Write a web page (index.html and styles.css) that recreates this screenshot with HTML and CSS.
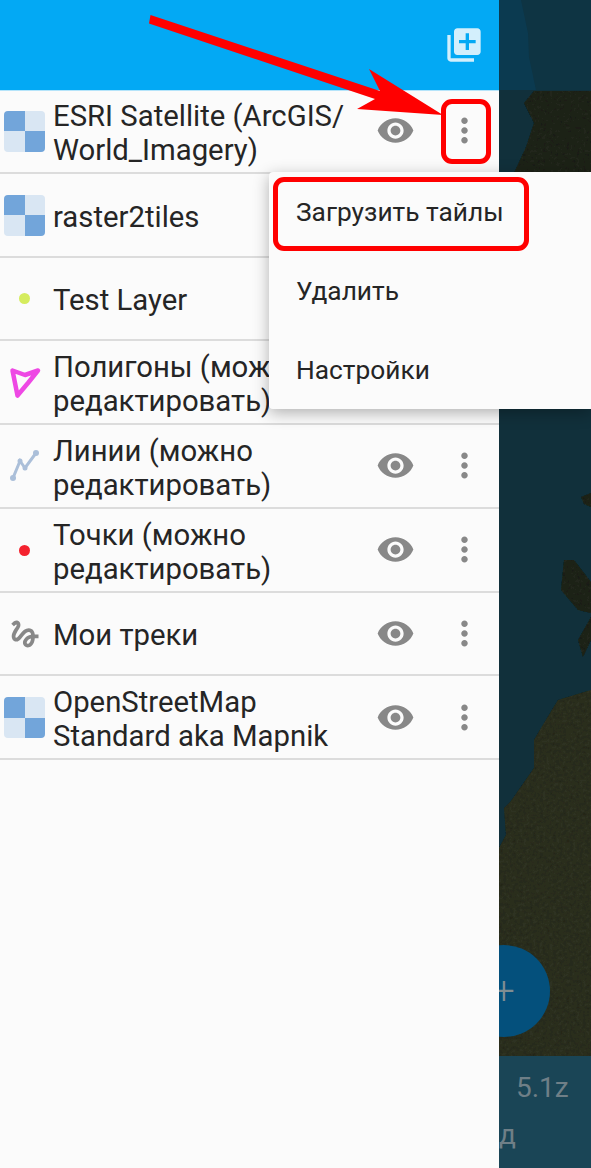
FILE: index.html
```html
<!DOCTYPE html>
<html lang="en">

<head>
    <meta charset="UTF-8">
    <meta name="viewport" content="width=device-width, initial-scale=1.0">
    <title>Слои</title>
    <link rel="stylesheet" href="styles.css">
</head>

<body>
    <div class="screen">
        <!-- map behind the drawer -->
        <svg class="map" viewBox="0 0 591 1168" aria-hidden="true">
            <defs>
                <filter id="grain" x="0" y="0" width="100%" height="100%">
                    <feTurbulence type="fractalNoise" baseFrequency="0.3" numOctaves="2" seed="4" />
                    <feColorMatrix values="0 0 0 0 0  0 0 0 0 0  0 0 0 0 0  0.6 0 0 0 -0.2" />
                    <feComposite in2="SourceGraphic" operator="in" />
                    <feMerge>
                        <feMergeNode in="SourceGraphic" />
                        <feMergeNode />
                    </feMerge>
                </filter>
            </defs>
            <rect x="499" y="0" width="92" height="90" fill="#0b3a50" />
            <path d="M521 0L528 33L529 57L536 90H591V0Z" fill="#0e3443" />
            <rect x="499" y="90" width="92" height="968" fill="#11303b" />
            <g filter="url(#grain)">
                <g fill="#24281d">
                    <path d="M534 91L524 103L534 123L526 147L514 173H591V91Z" />
                    <path d="M581 497L591 493V507L584 504Z" />
                    <path d="M564 560L574 560L591 582V613L578 610L561 590ZM591 617L578 640L583 657L591 640Z" />
                </g>
                <path d="M591 690L558 700L544 723L534 740L534 768L511 801L504 808L506 835L499 848V1058H591Z" fill="#2f3120" />
            </g>
            <rect x="499" y="1056" width="92" height="112" fill="#1a4556" />
        </svg>
        <button class="fab">+</button>
        <span class="zoom-level">5.1z</span>
        <span class="map-label">д</span>

        <div class="drawer">
            <header class="drawer-header">
                <svg class="icon add-layer" viewBox="0 0 24 24">
                    <path d="M4 6H2v14c0 1.1.9 2 2 2h14v-2H4V6zm16-4H8c-1.1 0-2 .9-2 2v12c0 1.1.9 2 2 2h12c1.100 0 2-.9 2-2V4c0-1.100-.9-2-2-2zm-1 9h-4v4h-2v-4H9V9h4V5h2v4h4v2z" />
                </svg>
            </header>

            <ul class="layers">
                <li class="layer">
                    <span class="layer-icon"><span class="tiles"><i class="dark"></i><i class="pale"></i><i class="pale"></i><i class="dark"></i></span></span>
                    <span class="layer-name">ESRI Satellite (ArcGIS/ World_Imagery)</span>
                    <svg class="icon eye" viewBox="0 0 24 24"><path d="M12 4.500C7 4.500 2.730 7.610 1 12c1.730 4.390 6 7.500 11 7.500s9.270-3.110 11-7.500c-1.730-4.390-6-7.500-11-7.500zM12 17c-2.760 0-5-2.240-5-5s2.240-5 5-5 5 2.240 5 5-2.240 5-5 5zm0-8c-1.660 0-3 1.340-3 3s1.340 3 3 3 3-1.340 3-3-1.340-3-3-3z" /></svg>
                    <svg class="icon more" viewBox="0 0 24 24"><path d="M12 8c1.100 0 2-.9 2-2s-.9-2-2-2-2 .9-2 2 .9 2 2 2zm0 2c-1.100 0-2 .9-2 2s.9 2 2 2 2-.9 2-2-.9-2-2-2zm0 6c-1.100 0-2 .9-2 2s.9 2 2 2 2-.9 2-2-.9-2-2-2z" /></svg>
                </li>
                <li class="layer">
                    <span class="layer-icon"><span class="tiles"><i class="dark"></i><i class="pale"></i><i class="pale"></i><i class="dark"></i></span></span>
                    <span class="layer-name">raster2tiles</span>
                </li>
                <li class="layer">
                    <span class="layer-icon"><span class="dot lime"></span></span>
                    <span class="layer-name">Test Layer</span>
                </li>
                <li class="layer">
                    <span class="layer-icon">
                        <svg class="shape" viewBox="0 0 41 41"><path d="M8.500 8.500L21 13L34 8.500L24 21L13.500 33.500Z" fill="none" stroke="#ee48e4" stroke-width="4.500" stroke-linejoin="round" /></svg>
                    </span>
                    <span class="layer-name">Полигоны (можно редактировать)</span>
                </li>
                <li class="layer">
                    <span class="layer-icon">
                        <svg class="shape" viewBox="0 0 41 41">
                            <path d="M9 32L16 15L21 22L32 7" fill="none" stroke="#abbfd9" stroke-width="3" />
                            <g fill="#abbfd9"><circle cx="9" cy="32" r="3" /><circle cx="16" cy="15" r="2.500" /><circle cx="21" cy="22" r="2.500" /><circle cx="32" cy="7" r="3" /></g>
                        </svg>
                    </span>
                    <span class="layer-name">Линии (можно редактировать)</span>
                    <svg class="icon eye" viewBox="0 0 24 24"><path d="M12 4.500C7 4.500 2.730 7.610 1 12c1.730 4.390 6 7.500 11 7.500s9.270-3.110 11-7.500c-1.730-4.390-6-7.500-11-7.500zM12 17c-2.760 0-5-2.240-5-5s2.240-5 5-5 5 2.240 5 5-2.240 5-5 5zm0-8c-1.660 0-3 1.340-3 3s1.340 3 3 3 3-1.340 3-3-1.340-3-3-3z" /></svg>
                    <svg class="icon more" viewBox="0 0 24 24"><path d="M12 8c1.100 0 2-.9 2-2s-.9-2-2-2-2 .9-2 2 .9 2 2 2zm0 2c-1.100 0-2 .9-2 2s.9 2 2 2 2-.9 2-2-.9-2-2-2zm0 6c-1.100 0-2 .9-2 2s.9 2 2 2 2-.9 2-2-.9-2-2-2z" /></svg>
                </li>
                <li class="layer">
                    <span class="layer-icon"><span class="dot red"></span></span>
                    <span class="layer-name">Точки (можно редактировать)</span>
                    <svg class="icon eye" viewBox="0 0 24 24"><path d="M12 4.500C7 4.500 2.730 7.610 1 12c1.730 4.390 6 7.500 11 7.500s9.270-3.110 11-7.500c-1.730-4.390-6-7.500-11-7.500zM12 17c-2.760 0-5-2.240-5-5s2.240-5 5-5 5 2.240 5 5-2.240 5-5 5zm0-8c-1.660 0-3 1.340-3 3s1.340 3 3 3 3-1.340 3-3-1.340-3-3-3z" /></svg>
                    <svg class="icon more" viewBox="0 0 24 24"><path d="M12 8c1.100 0 2-.9 2-2s-.9-2-2-2-2 .9-2 2 .9 2 2 2zm0 2c-1.100 0-2 .9-2 2s.9 2 2 2 2-.9 2-2-.9-2-2-2zm0 6c-1.100 0-2 .9-2 2s.9 2 2 2 2-.9 2-2-.9-2-2-2z" /></svg>
                </li>
                <li class="layer">
                    <span class="layer-icon">
                        <svg class="track" viewBox="0 0 24 24"><path d="M4.590 6.890c.7-.71 1.400-1.350 1.710-1.220.5.2 0 1.030-.3 1.520-.25.42-2.860 3.890-2.860 6.310 0 1.280.48 2.340 1.340 2.980.75.56 1.740.73 2.640.46 1.070-.31 1.950-1.400 3.060-2.770 1.210-1.490 2.830-3.440 4.080-3.440 1.630 0 1.650 1.010 1.760 1.790-3.780.64-5.380 3.670-5.380 5.370 0 1.700 1.440 3.090 3.210 3.090 1.630 0 4.290-1.330 4.690-6.100H21v-2.500h-2.470c-.15-1.650-1.090-4.200-4.030-4.200-2.250 0-4.180 1.910-4.940 2.840-.58.73-2.060 2.480-2.290 2.720-.25.3-.68.84-1.110.84-.45 0-.72-.83-.36-1.920.35-1.090 1.400-2.860 1.850-3.520.78-1.140 1.300-1.920 1.300-3.280C8.950 3.690 7.310 3 6.440 3 5.120 3 3.970 4 3.720 4.250c-.36.36-.66.66-.88.93l1.750 1.710zm9.290 11.660c-.31 0-.74-.26-.74-.72 0-.6.73-2.200 2.870-2.760-.3 2.690-1.430 3.480-2.130 3.480z" /></svg>
                    </span>
                    <span class="layer-name">Мои треки</span>
                    <svg class="icon eye" viewBox="0 0 24 24"><path d="M12 4.500C7 4.500 2.730 7.610 1 12c1.730 4.390 6 7.500 11 7.500s9.270-3.110 11-7.500c-1.730-4.390-6-7.500-11-7.500zM12 17c-2.760 0-5-2.240-5-5s2.240-5 5-5 5 2.240 5 5-2.240 5-5 5zm0-8c-1.660 0-3 1.340-3 3s1.340 3 3 3 3-1.340 3-3-1.340-3-3-3z" /></svg>
                    <svg class="icon more" viewBox="0 0 24 24"><path d="M12 8c1.100 0 2-.9 2-2s-.9-2-2-2-2 .9-2 2 .9 2 2 2zm0 2c-1.100 0-2 .9-2 2s.9 2 2 2 2-.9 2-2-.9-2-2-2zm0 6c-1.100 0-2 .9-2 2s.9 2 2 2 2-.9 2-2-.9-2-2-2z" /></svg>
                </li>
                <li class="layer">
                    <span class="layer-icon"><span class="tiles"><i class="dark"></i><i class="pale"></i><i class="pale"></i><i class="dark"></i></span></span>
                    <span class="layer-name">OpenStreetMap Standard aka Mapnik</span>
                    <svg class="icon eye" viewBox="0 0 24 24"><path d="M12 4.500C7 4.500 2.730 7.610 1 12c1.730 4.390 6 7.500 11 7.500s9.270-3.110 11-7.500c-1.730-4.390-6-7.500-11-7.500zM12 17c-2.760 0-5-2.240-5-5s2.240-5 5-5 5 2.240 5 5-2.240 5-5 5zm0-8c-1.660 0-3 1.340-3 3s1.340 3 3 3 3-1.340 3-3-1.340-3-3-3z" /></svg>
                    <svg class="icon more" viewBox="0 0 24 24"><path d="M12 8c1.100 0 2-.9 2-2s-.9-2-2-2-2 .9-2 2 .9 2 2 2zm0 2c-1.100 0-2 .9-2 2s.9 2 2 2 2-.9 2-2-.9-2-2-2zm0 6c-1.100 0-2 .9-2 2s.9 2 2 2 2-.9 2-2-.9-2-2-2z" /></svg>
                </li>
            </ul>
        </div>

        <div class="menu">
            <div class="menu-item">Загрузить тайлы</div>
            <div class="menu-item">Удалить</div>
            <div class="menu-item">Настройки</div>
        </div>

        <!-- red marks drawn on top of the screenshot -->
        <div class="mark mark-more"></div>
        <div class="mark mark-item"></div>
        <svg class="arrow" viewBox="0 0 591 1168" aria-hidden="true">
            <polygon points="150.500,15 380,91 369,69 443,115 357,109 375,99 149,23.500" fill="#ff0000" />
        </svg>
    </div>
</body>

</html>
```

FILE: styles.css
```css
html,
body {
    margin: 0;
    padding: 0;
}

body {
    font-family: Roboto, "Noto Sans", sans-serif;
    background-color: #11303b;
    color: #222222;
}

.screen {
    position: relative;
    width: 591px;
    height: 1168px;
    overflow: hidden;
}

.map {
    position: absolute;
    top: 0;
    left: 0;
    width: 591px;
    height: 1168px;
}

.fab {
    position: absolute;
    left: 458px;
    top: 945px;
    width: 92px;
    height: 92px;
    padding: 0;
    border: none;
    border-radius: 50%;
    background-color: #04507c;
    color: #7f8d92;
    font-family: Roboto, sans-serif;
    font-size: 38px;
    font-weight: 300;
}

.zoom-level {
    position: absolute;
    left: 516px;
    top: 1072px;
    font-size: 28px;
    line-height: 32px;
    color: #6f7f87;
}

.map-label {
    position: absolute;
    left: 499px;
    top: 1119px;
    font-size: 28px;
    line-height: 32px;
    color: #6f7f87;
}

.drawer {
    position: relative;
    width: 499px;
    height: 1168px;
    background-color: #fbfbfb;
}

.drawer-header {
    display: flex;
    align-items: flex-start;
    justify-content: flex-end;
    box-sizing: border-box;
    height: 91px;
    padding: 25px 15px 0 0;
    background-color: #03a9f4;
    border-bottom: 1px solid #b5e4fa;
}

.icon {
    display: block;
    flex: none;
    width: 39px;
    height: 39px;
}

.add-layer {
    width: 40px;
    height: 40px;
    fill: #d3effc;
}

.layers {
    list-style: none;
    margin: -1px 0 0;
    padding: 0;
}

.layer {
    display: flex;
    align-items: center;
    box-sizing: border-box;
    height: 83.75px;
    padding-left: 4px;
    border-bottom: 2px solid #dcdcdc;
    font-size: 29.3px;
    line-height: 34px;
    color: #252525;
}

.layer-icon {
    display: flex;
    flex: none;
    align-items: center;
    justify-content: center;
    width: 41px;
    height: 41px;
    margin: 1px 8px 0 0;
}

.layer-name {
    flex: none;
    width: 303px;
    margin-top: 4px;
}

.eye {
    margin-left: 20px;
    fill: #888888;
}

.more {
    margin-left: 30px;
    fill: #888888;
}

.tiles {
    display: grid;
    grid-template-columns: 1fr 1fr;
    grid-template-rows: 1fr 1fr;
    width: 41px;
    height: 41px;
    border-radius: 4px;
    overflow: hidden;
}

.dark {
    background-color: #72a5da;
}

.pale {
    background-color: #d9e6f3;
}

.dot {
    width: 11px;
    height: 11px;
    border-radius: 50%;
}

.lime {
    background-color: #d5ec5e;
}

.red {
    background-color: #f4222e;
}

.shape {
    width: 41px;
    height: 41px;
}

.track {
    flex: none;
    width: 36px;
    height: 36px;
    fill: #888888;
}

.menu {
    position: absolute;
    top: 172px;
    left: 269px;
    width: 322px;
    background-color: #fbfbfb;
    border-radius: 4px 0 0 4px;
    box-shadow: 0 4px 16px rgba(0, 0, 0, 0.3);
}

.menu-item {
    display: flex;
    align-items: center;
    height: 79px;
    padding-left: 27px;
    font-size: 26.3px;
    color: #252525;
}

.mark {
    position: absolute;
    box-sizing: border-box;
    border: 5px solid #ff0000;
    border-radius: 11px;
}

.mark-more {
    left: 441px;
    top: 99px;
    width: 50px;
    height: 65px;
}

.mark-item {
    left: 273px;
    top: 177px;
    width: 256px;
    height: 74px;
}

.arrow {
    position: absolute;
    top: 0;
    left: 0;
    width: 591px;
    height: 1168px;
}
```
